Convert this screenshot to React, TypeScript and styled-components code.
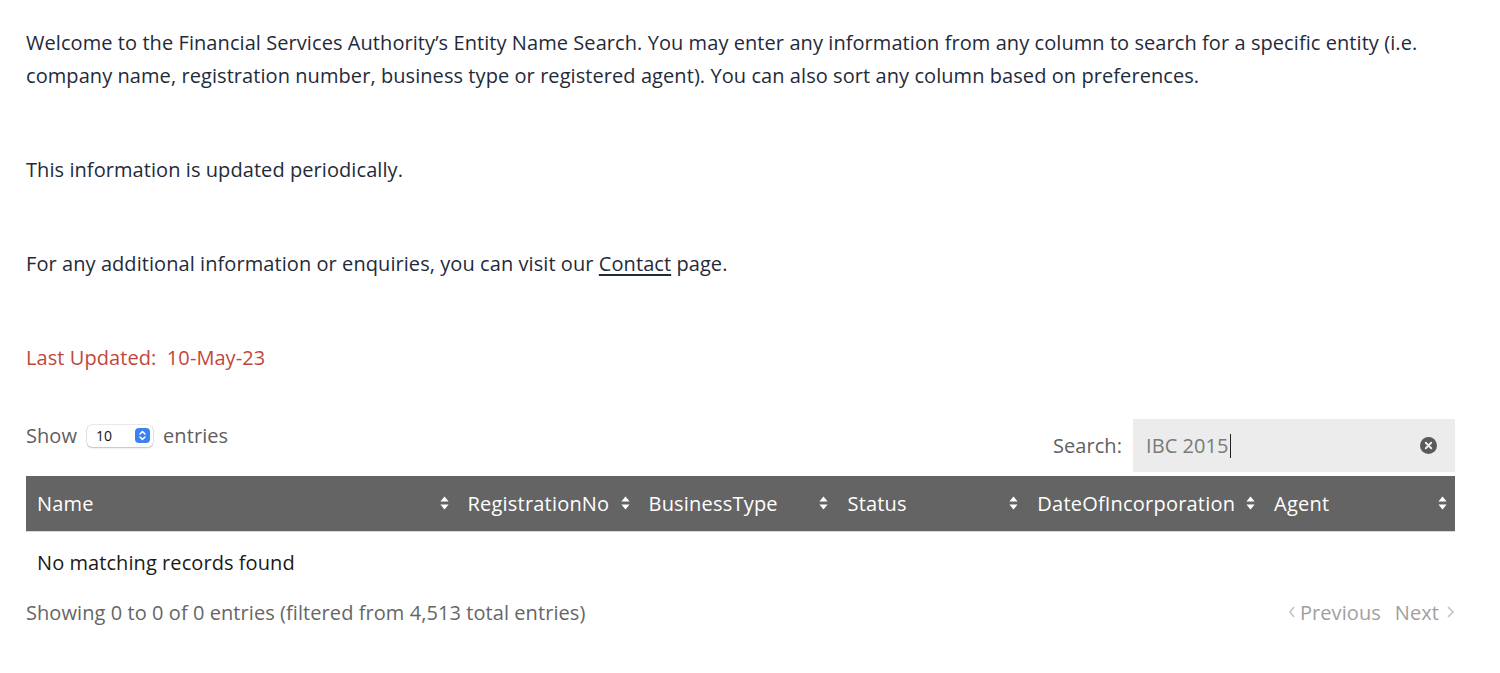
import styled, { createGlobalStyle } from 'styled-components'

const GlobalStyle = createGlobalStyle`
  html, body {
    margin: 0;
    padding: 0;
    background: #ffffff;
  }
  body {
    font-family: 'Open Sans', 'Noto Sans', sans-serif;
  }
`

const Page = styled.main`
  padding: 26px 45px 40px 26px;
  color: #1f2b3a;
  font-size: 20px;
  letter-spacing: 0.07px;
`

const Para = styled.p<{ $tone?: 'alert' }>`
  margin: 0 0 61px;
  line-height: 33px;
  color: ${({ $tone }) => ($tone === 'alert' ? '#c2473b' : '#1f2b3a')};
`

const Link = styled.a`
  color: #1f2b3a;
  text-decoration: underline;
  text-underline-offset: 3px;
`

const Toolbar = styled.div`
  display: flex;
  justify-content: space-between;
  align-items: flex-start;
  margin-top: -16px;
`

const Length = styled.label`
  display: flex;
  align-items: center;
  gap: 10px;
  padding-top: 3px;
  color: #5f5f5f;
`

const Select = styled.div`
  display: flex;
  align-items: center;
  justify-content: space-between;
  box-sizing: border-box;
  width: 66px;
  height: 22px;
  padding: 0 3px 0 9px;
  font-size: 14px;
  letter-spacing: 0;
  color: #111;
  background: #fff;
  border-radius: 5px;
  box-shadow: 0 0 0 0.5px rgb(0 0 0 / 16%), 0 1px 2px rgb(0 0 0 / 18%);
`

const Stepper = styled.span`
  display: flex;
  align-items: center;
  justify-content: center;
  width: 15px;
  height: 15px;
  background: #3a82f0;
  border-radius: 4px;
`

const Filter = styled.label`
  display: flex;
  align-items: center;
  gap: 11px;
  color: #5f5f5f;
`

const SearchBox = styled.div`
  display: flex;
  align-items: center;
  justify-content: space-between;
  box-sizing: border-box;
  width: 322px;
  height: 53px;
  padding: 0 18px 0 13px;
  background: #ececec;
  color: #7a7a7a;
`

const Caret = styled.span`
  display: inline-block;
  width: 1px;
  height: 24px;
  margin-left: 1px;
  vertical-align: -5px;
  background: #222;
`

const Table = styled.table`
  width: 100%;
  border-collapse: collapse;
  margin-top: 4px;
`

const HeadCell = styled.th<{ $w: number }>`
  position: relative;
  width: ${({ $w }) => $w}px;
  height: 55px;
  padding: 0 28px 0 11px;
  box-sizing: border-box;
  text-align: left;
  font-weight: 400;
  font-size: 20px;
  letter-spacing: 0.2px;
  color: #fff;
  background: #646464;
  border-bottom: 1px solid #d9d9d9;
  white-space: nowrap;
`

const SortIcon = styled.svg`
  position: absolute;
  right: 8px;
  top: 50%;
  transform: translateY(-50%);
`

const EmptyCell = styled.td`
  padding: 17px 11px 18px;
  font-size: 20px;
  color: #1a1a1a;
`

const Footer = styled.div`
  display: flex;
  justify-content: space-between;
  align-items: center;
  margin-top: 5px;
  color: #666;
`

const Pager = styled.div`
  display: flex;
  align-items: center;
  gap: 14px;
  color: #a0a0a0;
`

const PageBtn = styled.span`
  display: inline-flex;
  align-items: center;
  gap: 4px;
`

const columns = [
  { label: 'Name', w: 431 },
  { label: 'RegistrationNo', w: 181 },
  { label: 'BusinessType', w: 199 },
  { label: 'Status', w: 190 },
  { label: 'DateOfIncorporation', w: 236 },
  { label: 'Agent', w: 192 },
]

function Sort() {
  return (
    <SortIcon width="9" height="14" viewBox="0 0 9 14">
      <path d="M4.5 0.5 L8.6 5.6 H0.4 Z" fill="#fff" />
      <path d="M4.5 13.5 L8.6 8.4 H0.4 Z" fill="#fff" />
    </SortIcon>
  )
}

export default function App() {
  return (
    <>
      <GlobalStyle />
      <Page>
        <Para>
          Welcome to the Financial Services Authority’s Entity Name Search. You may enter any information from any
          column to search for a specific entity (i.e. company name, registration number, business type or registered
          agent). You can also sort any column based on preferences.
        </Para>
        <Para>This information is updated periodically.</Para>
        <Para>
          For any additional information or enquiries, you can visit our <Link href="#">Contact</Link> page.
        </Para>
        <Para $tone="alert">Last Updated:&nbsp; 10-May-23</Para>

        <Toolbar>
          <Length>
            Show
            <Select>
              10
              <Stepper>
                <svg width="9" height="11" viewBox="0 0 9 11">
                  <path d="M2 4 L4.5 1.6 L7 4 M2 7 L4.5 9.4 L7 7" stroke="#fff" strokeWidth="1.5" fill="none" strokeLinecap="round" strokeLinejoin="round" />
                </svg>
              </Stepper>
            </Select>
            entries
          </Length>
          <Filter>
            Search:
            <SearchBox>
              <span>
                IBC 2015
                <Caret />
              </span>
              <svg width="17" height="17" viewBox="0 0 17 17">
                <circle cx="8.5" cy="8.5" r="8.5" fill="#5a5a5a" />
                <path d="M5.8 5.8 L11.2 11.2 M11.2 5.8 L5.8 11.2" stroke="#ececec" strokeWidth="2" strokeLinecap="round" />
              </svg>
            </SearchBox>
          </Filter>
        </Toolbar>

        <Table>
          <thead>
            <tr>
              {columns.map((c) => (
                <HeadCell key={c.label} $w={c.w}>
                  {c.label}
                  <Sort />
                </HeadCell>
              ))}
            </tr>
          </thead>
          <tbody>
            <tr>
              <EmptyCell colSpan={6}>No matching records found</EmptyCell>
            </tr>
          </tbody>
        </Table>

        <Footer>
          <span>Showing 0 to 0 of 0 entries (filtered from 4,513 total entries)</span>
          <Pager>
            <PageBtn>
              <svg width="8" height="14" viewBox="0 0 8 14">
                <path d="M6 2 L2 7 L6 12" stroke="#c4c4c4" strokeWidth="1.6" fill="none" />
              </svg>
              Previous
            </PageBtn>
            <PageBtn>
              Next
              <svg width="12" height="14" viewBox="0 0 12 14">
                <path d="M5 2 L10 7 L5 12" stroke="#c4c4c4" strokeWidth="1.6" fill="none" />
              </svg>
            </PageBtn>
          </Pager>
        </Footer>
      </Page>
    </>
  )
}
